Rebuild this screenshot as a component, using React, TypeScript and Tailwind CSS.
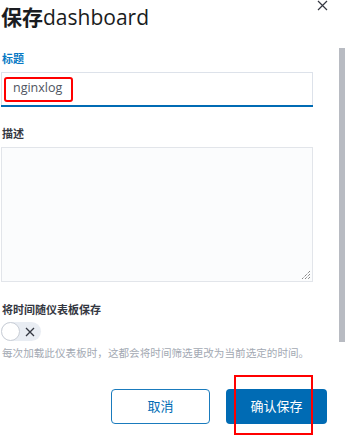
import React from "react";

const font = { fontFamily: '"Open Sans", "Noto Sans CJK SC", sans-serif' };

export default function App() {
  return (
    <div
      className="relative w-[345px] h-[441px] overflow-hidden bg-white"
      style={font}
    >
      {/* close */}
      <div className="absolute left-[317px] top-[0px] w-[11px] h-[11px]">
        <svg width="11" height="11" viewBox="0 0 11 11">
          <path d="M1 1 L10 10 M10 1 L1 10" stroke="#343741" strokeWidth="1.2" />
        </svg>
      </div>
      {/* scrollbar thumb */}
      <div className="absolute left-[339px] top-[48px] w-[6px] h-[294px] bg-[#b8bbc2]" />

      <div className="ml-px w-[312px] flex flex-col">
        <div className="pt-[3px] h-[31px] leading-[28px] text-[21px] text-[#1a1c21] whitespace-nowrap">
          <span className="font-bold">保存</span>
          <span className="font-normal">dashboard</span>
        </div>

        <div className="mt-[20px] h-[16px] leading-[16px] text-[11px] font-semibold text-[#0779c4] pl-px">
          标题
        </div>

        <div className="relative mt-[5px] h-[35px] bg-white border border-[#dde2ea] border-b-0 flex items-center">
          <span className="pl-[11px] text-[12.5px] text-[#4f5561] leading-none -mt-[3px]">nginxlog</span>
          <div className="absolute left-[-1px] right-[-1px] bottom-0 h-[2px] bg-[#006bb4]" />
          <div className="absolute left-[2px] top-[4px] w-[69px] h-[25px] border-[2.5px] border-[#ff0000] rounded-[3px]" />
        </div>

        <div className="mt-[19px] h-[16px] leading-[16px] text-[11px] font-semibold text-[#343741] pl-px">
          描述
        </div>

        <div className="relative mt-[5px] h-[135px] bg-[#fbfcfd] border border-[#e2e5ea]">
          <svg className="absolute right-[1px] bottom-[1px]" width="11" height="11" viewBox="0 0 11 11">
            <path d="M10 2 L2 10 M10 5 L5 10 M10 8 L8 10" stroke="#555" strokeWidth="1" strokeDasharray="1 1" />
          </svg>
        </div>

        <div className="mt-[20px] h-[16px] leading-[16px] text-[11px] font-semibold text-[#343741] pl-px whitespace-nowrap">
          将时间随仪表板保存
        </div>

        <div className="mt-[4px] relative w-[40px] h-[19px] rounded-full bg-[#e9edf3] flex items-center">
          <div className="absolute left-0 top-0 w-[19px] h-[19px] rounded-full bg-white border border-[#c9ced6]" />
          <svg className="absolute left-[24px] top-[5px]" width="10" height="10" viewBox="0 0 10 10">
            <path d="M1 1 L9 9 M9 1 L1 9" stroke="#343741" strokeWidth="1.3" />
          </svg>
        </div>

        <div className="mt-[5px] h-[14px] leading-[14px] text-[10.6px] text-[#a3a9b3] pl-px whitespace-nowrap">
          每次加载此仪表板时，这都会将时间筛选更改为当前选定的时间。
        </div>
      </div>

      <div className="mt-[29px] flex justify-end gap-[16px] pr-[18px]">
        <div className="w-[99px] h-[35px] rounded-[4px] border border-[#1a7bbd] bg-white flex items-center justify-center text-[13px] text-[#006bb4]">
          取消
        </div>
        <div className="relative w-[101px] h-[35px] rounded-[4px] bg-[#006bb4] flex items-center justify-center text-[13px] text-white">
          确认保存
          <div className="absolute left-[8px] top-[-14px] w-[79px] h-[60px] border-[2.5px] border-[#ff0000]" />
        </div>
      </div>
    </div>
  );
}
